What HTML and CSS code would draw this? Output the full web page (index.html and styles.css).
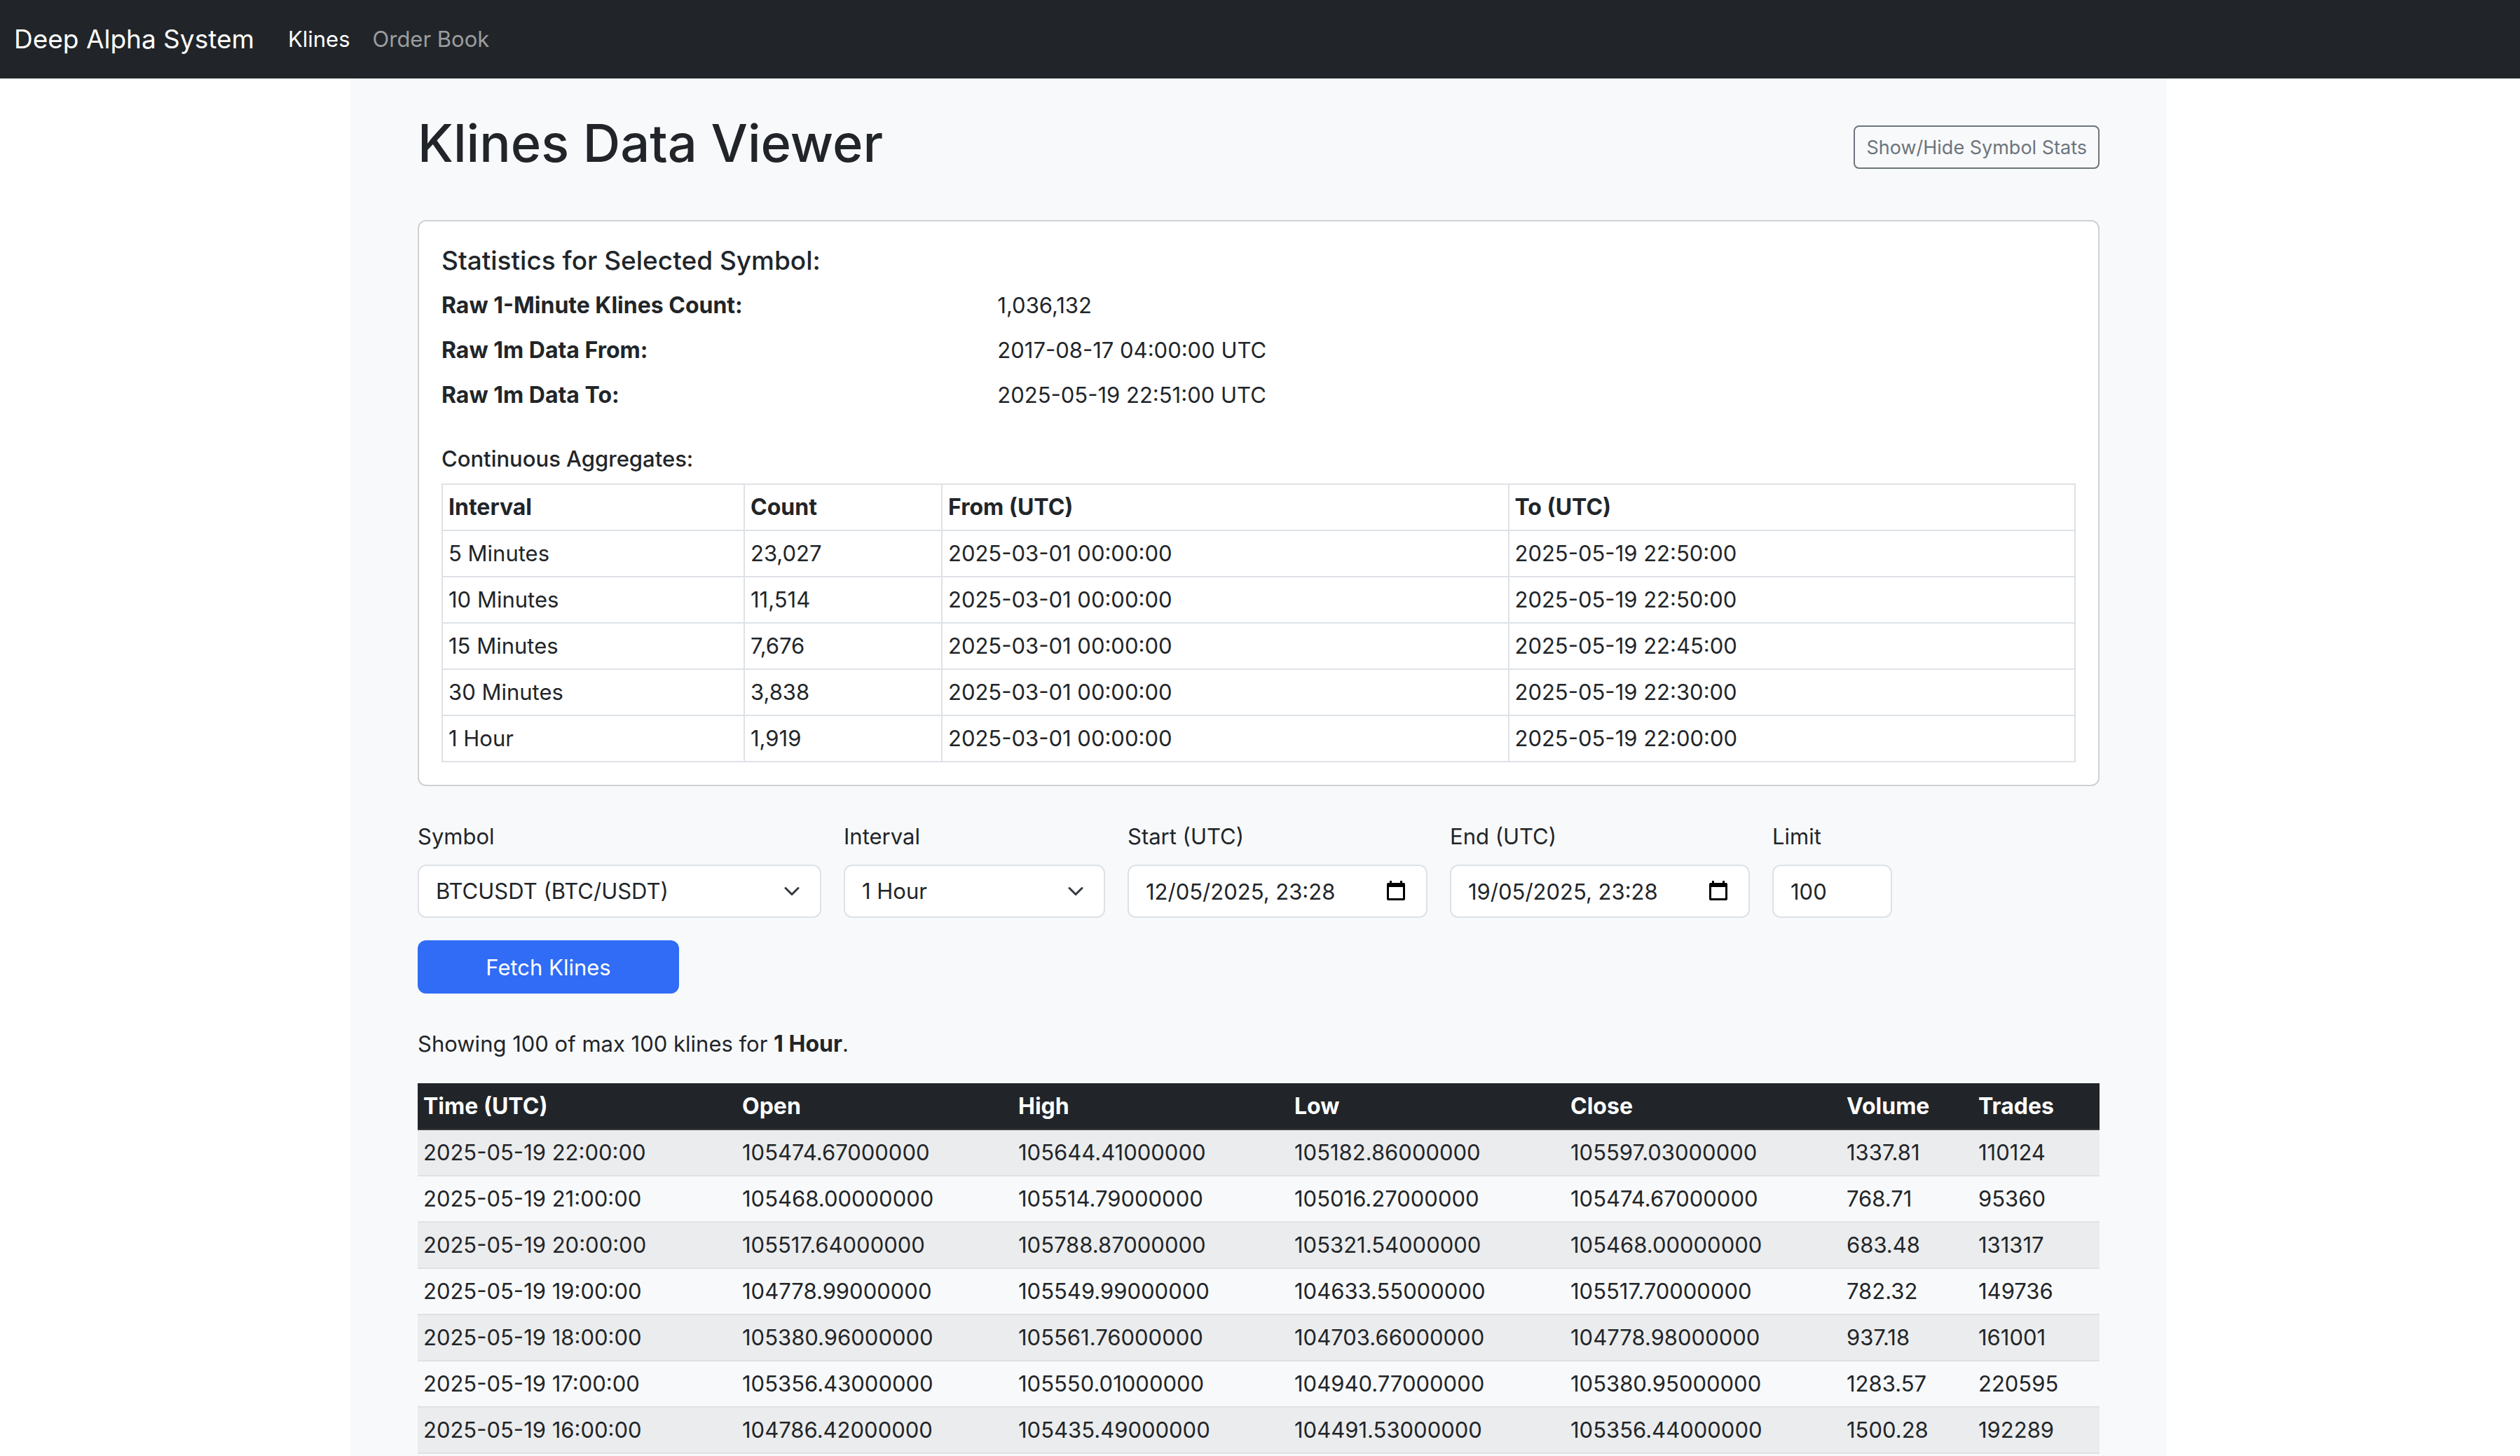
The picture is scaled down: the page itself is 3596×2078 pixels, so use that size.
FILE: index.html
```html
<!DOCTYPE html>
<html lang="en">
<head>
<meta charset="utf-8">
<title>Klines Data Viewer</title>
<link rel="stylesheet" href="styles.css">
</head>
<body>
<nav class="navbar">
  <a class="brand" href="#">Deep Alpha System</a>
  <a class="nav-link active" href="#">Klines</a>
  <a class="nav-link" href="#">Order Book</a>
</nav>
<div class="scroller">
<main class="page">
  <header class="page-head">
    <h1>Klines Data Viewer</h1>
    <button class="btn-outline" type="button">Show/Hide Symbol Stats</button>
  </header>

  <section class="card">
    <h5 class="card-title">Statistics for Selected Symbol:</h5>
    <dl class="stats">
      <dt>Raw 1-Minute Klines Count:</dt><dd>1,036,132</dd>
      <dt>Raw 1m Data From:</dt><dd>2017-08-17 04:00:00 UTC</dd>
      <dt>Raw 1m Data To:</dt><dd>2025-05-19 22:51:00 UTC</dd>
    </dl>
    <h6 class="card-subtitle">Continuous Aggregates:</h6>
    <table class="table bordered">
      <colgroup><col class="c-interval"><col class="c-count"><col class="c-date"><col class="c-date"></colgroup>
      <thead><tr><th>Interval</th><th>Count</th><th>From (UTC)</th><th>To (UTC)</th></tr></thead>
      <tbody>
        <tr><td>5 Minutes</td><td>23,027</td><td>2025-03-01 00:00:00</td><td>2025-05-19 22:50:00</td></tr>
        <tr><td>10 Minutes</td><td>11,514</td><td>2025-03-01 00:00:00</td><td>2025-05-19 22:50:00</td></tr>
        <tr><td>15 Minutes</td><td>7,676</td><td>2025-03-01 00:00:00</td><td>2025-05-19 22:45:00</td></tr>
        <tr><td>30 Minutes</td><td>3,838</td><td>2025-03-01 00:00:00</td><td>2025-05-19 22:30:00</td></tr>
        <tr><td>1 Hour</td><td>1,919</td><td>2025-03-01 00:00:00</td><td>2025-05-19 22:00:00</td></tr>
      </tbody>
    </table>
  </section>

  <form class="filters">
    <div class="field f-symbol">
      <label for="symbol">Symbol</label>
      <div class="control">
        <select id="symbol"><option>BTCUSDT (BTC/USDT)</option></select>
        <svg class="chevron" viewBox="0 0 16 16" aria-hidden="true"><path d="m2 5 6 6 6-6"/></svg>
      </div>
    </div>
    <div class="field f-interval">
      <label for="interval">Interval</label>
      <div class="control">
        <select id="interval"><option>1 Hour</option></select>
        <svg class="chevron" viewBox="0 0 16 16" aria-hidden="true"><path d="m2 5 6 6 6-6"/></svg>
      </div>
    </div>
    <div class="field f-date">
      <label for="start">Start (UTC)</label>
      <div class="control">
        <input id="start" type="text" value="12/05/2025, 23:28">
        <svg class="calendar" viewBox="0 0 26 28" aria-hidden="true"><path fill-rule="evenodd" d="M4 0h3v3h12V0h3v3h2a2 2 0 0 1 2 2v21a2 2 0 0 1-2 2H2a2 2 0 0 1-2-2V5a2 2 0 0 1 2-2h2zM3 9v16h20V9z"/></svg>
      </div>
    </div>
    <div class="field f-date">
      <label for="end">End (UTC)</label>
      <div class="control">
        <input id="end" type="text" value="19/05/2025, 23:28">
        <svg class="calendar" viewBox="0 0 26 28" aria-hidden="true"><path fill-rule="evenodd" d="M4 0h3v3h12V0h3v3h2a2 2 0 0 1 2 2v21a2 2 0 0 1-2 2H2a2 2 0 0 1-2-2V5a2 2 0 0 1 2-2h2zM3 9v16h20V9z"/></svg>
      </div>
    </div>
    <div class="field f-limit">
      <label for="limit">Limit</label>
      <div class="control"><input id="limit" type="text" inputmode="numeric" value="100"></div>
    </div>
    <button class="btn-primary" type="submit">Fetch Klines</button>
  </form>

  <p class="summary">Showing 100 of max 100 klines for <strong>1 Hour</strong>.</p>

  <table class="table striped">
    <colgroup><col class="k-time"><col class="k-price"><col class="k-price"><col class="k-price"><col class="k-price"><col class="k-volume"><col></colgroup>
    <thead><tr><th>Time (UTC)</th><th>Open</th><th>High</th><th>Low</th><th>Close</th><th>Volume</th><th>Trades</th></tr></thead>
    <tbody>
      <tr><td>2025-05-19 22:00:00</td><td>105474.67000000</td><td>105644.41000000</td><td>105182.86000000</td><td>105597.03000000</td><td>1337.81</td><td>110124</td></tr>
      <tr><td>2025-05-19 21:00:00</td><td>105468.00000000</td><td>105514.79000000</td><td>105016.27000000</td><td>105474.67000000</td><td>768.71</td><td>95360</td></tr>
      <tr><td>2025-05-19 20:00:00</td><td>105517.64000000</td><td>105788.87000000</td><td>105321.54000000</td><td>105468.00000000</td><td>683.48</td><td>131317</td></tr>
      <tr><td>2025-05-19 19:00:00</td><td>104778.99000000</td><td>105549.99000000</td><td>104633.55000000</td><td>105517.70000000</td><td>782.32</td><td>149736</td></tr>
      <tr><td>2025-05-19 18:00:00</td><td>105380.96000000</td><td>105561.76000000</td><td>104703.66000000</td><td>104778.98000000</td><td>937.18</td><td>161001</td></tr>
      <tr><td>2025-05-19 17:00:00</td><td>105356.43000000</td><td>105550.01000000</td><td>104940.77000000</td><td>105380.95000000</td><td>1283.57</td><td>220595</td></tr>
      <tr><td>2025-05-19 16:00:00</td><td>104786.42000000</td><td>105435.49000000</td><td>104491.53000000</td><td>105356.44000000</td><td>1500.28</td><td>192289</td></tr>
    </tbody>
  </table>
</main>
</div>
</body>
</html>
```
FILE: styles.css
```css
* { box-sizing: border-box; }

body {
  display: flex;
  flex-direction: column;
  min-height: 100vh;
  margin: 0;
  background: #fff;
  color: #212529;
  font: 400 31px/48px Inter, "Liberation Sans", sans-serif;
}

h1, h5, h6, p, dl, dd { margin: 0; }

.navbar {
  display: flex;
  align-items: center;
  height: 112px;
  padding: 0 20px;
  background: #212529;
}
.brand { margin-right: 32px; color: #fff; font-size: 37px; text-decoration: none; }
.nav-link { padding: 0 16px; color: #9b9d9e; text-decoration: none; }
.nav-link.active { color: #fff; }

.scroller { display: flex; flex: 1; padding-right: 4px; }
.page {
  width: 100%;
  max-width: 2592px;
  margin: 0 auto;
  padding: 48px 96px 0;
  background: #f8f9fa;
}
.page-head {
  display: flex;
  align-items: center;
  justify-content: space-between;
  height: 100px;
  margin-bottom: 54px;
}
h1 { padding-bottom: 12px; font-weight: 500; font-size: 74px; line-height: 88px; }

button { font-family: inherit; cursor: pointer; }
.btn-outline {
  height: 62px;
  padding: 0 16px;
  border: 2px solid #6c757d;
  border-radius: 8px;
  background: transparent;
  color: #6c757d;
  font-size: 27px;
}

.card {
  padding: 32px;
  border: 2px solid #d0d1d2;
  border-radius: 12px;
  background: #fff;
}
.card-title { margin-bottom: 16px; font-weight: 500; font-size: 37px; }
.stats { display: grid; grid-template-columns: 1fr 2fr; gap: 16px 24px; }
.stats dt { font-weight: 700; font-size: 32px; }
.card-subtitle { margin: 48px 0 16px; font-weight: 500; font-size: 31px; line-height: 38px; }

.table { width: 100%; table-layout: fixed; border-collapse: collapse; text-align: left; }
.table th, .table td { height: 66px; padding: 8px; border-bottom: 2px solid #dee2e6; white-space: nowrap; }
.table th { font-weight: 700; font-size: 32px; }
.bordered th, .bordered td { border: 2px solid #dee2e6; }
.c-interval { width: 431px; }
.c-count { width: 282px; }

.filters { display: flex; flex-wrap: wrap; gap: 32px; margin-top: 48px; }
.field label { display: block; margin-bottom: 16px; }
.f-symbol { width: 576px; }
.f-interval { width: 373px; }
.f-date { width: 428px; }
.f-limit { width: 171px; }
.control { position: relative; }
.control select, .control input {
  width: 100%;
  height: 76px;
  padding: 0 24px;
  border: 2px solid #dee2e6;
  border-radius: 12px;
  appearance: none;
  background: #fff;
  color: inherit;
  font: inherit;
}
.chevron { position: absolute; top: 26px; right: 30px; width: 24px; height: 24px; pointer-events: none; }
.chevron path { fill: none; stroke: #343a40; stroke-width: 2; stroke-linecap: round; stroke-linejoin: round; }
.calendar { position: absolute; top: 23px; right: 32px; width: 26px; height: 28px; }
.btn-primary {
  width: 373px;
  height: 76px;
  margin-right: 50%;
  border: 0;
  border-radius: 12px;
  background: #306cf6;
  color: #fff;
  font-size: 31px;
}

.summary { margin: 48px 0 32px; }
.summary strong { font-size: 32px; }

.k-time { width: 455px; }
.k-price { width: 394px; }
.k-volume { width: 188px; }
.striped th { border-color: #373b3e; background: #212529; color: #fff; }
.striped tbody tr:nth-child(odd) { background: #ebeced; }
```
